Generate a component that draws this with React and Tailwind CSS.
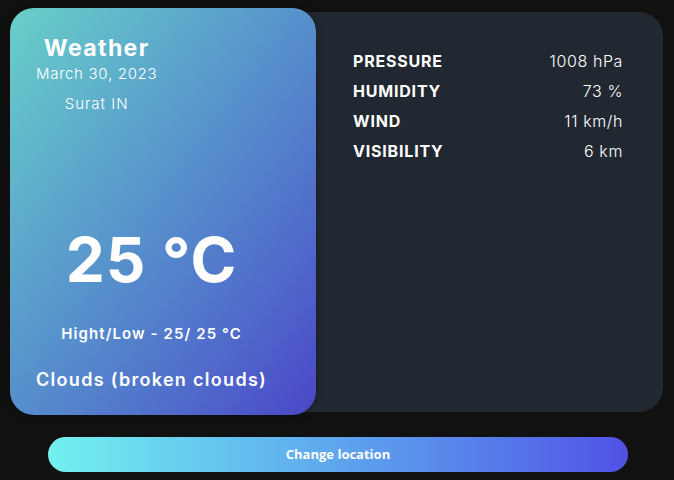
export default function App() {
  const stats = [
    ["PRESSURE", "1008 hPa"],
    ["HUMIDITY", "73 %"],
    ["WIND", "11 km/h"],
    ["VISIBILITY", "6 km"],
  ];

  return (
    <div className="w-[674px] h-[480px] bg-[#111111] overflow-hidden" style={{ fontFamily: "Inter, 'Open Sans', sans-serif" }}>
      <div className="flex pt-2 pl-[10px]">
        {/* weather card */}
        <div className="relative z-10 w-[306px] h-[407px] rounded-[24px] bg-gradient-to-br from-[#68d0c8] to-[#4b45c8] shadow-[0_0_8px_rgba(0,0,0,0.35)] pl-[26px] pt-[26px] text-white flex flex-col items-start">
          <div className="flex flex-col items-center">
            <h1 className="text-[23px] font-bold leading-7 tracking-[1.4px]">Weather</h1>
            <p className="text-[15px] font-light leading-5 mt-[2px] tracking-[0.7px]">March 30, 2023</p>
            <p className="text-[15px] font-light leading-5 mt-[10px] tracking-[1px]">Surat IN</p>
          </div>
          <div className="flex flex-col items-center mt-[108px]">
            <h2 className="text-[62px] font-bold leading-[76px] tracking-[1px]">25 °C</h2>
            <p className="text-[15px] font-semibold leading-5 mt-[26px] tracking-[1.1px]">Hight/Low - 25/ 25 °C</p>
            <p className="text-[18px] font-semibold leading-6 mt-[24px] tracking-[1.3px]">Clouds (broken clouds)</p>
          </div>
        </div>

        {/* details panel */}
        <div className="-ml-[20px] mt-1 w-[367px] h-[400px] rounded-r-[24px] bg-[#222831] pl-[57px] pr-[40px] pt-[34px]">
          {stats.map(([label, value]) => (
            <div key={label} className="flex justify-between items-center h-[30px] text-white">
              <span className="text-[16px] font-bold tracking-[0.8px]">{label}</span>
              <span className="text-[16px] font-light tracking-[0.6px]">{value}</span>
            </div>
          ))}
        </div>
      </div>

      <div className="flex justify-center mt-[22px]">
        <button className="w-[580px] h-[35px] ml-[2px] rounded-full bg-gradient-to-r from-[#72f1ee] to-[#5150e4] text-white text-[13px] font-bold" style={{ fontFamily: "'Open Sans', sans-serif" }}>
          Change location
        </button>
      </div>
    </div>
  );
}
